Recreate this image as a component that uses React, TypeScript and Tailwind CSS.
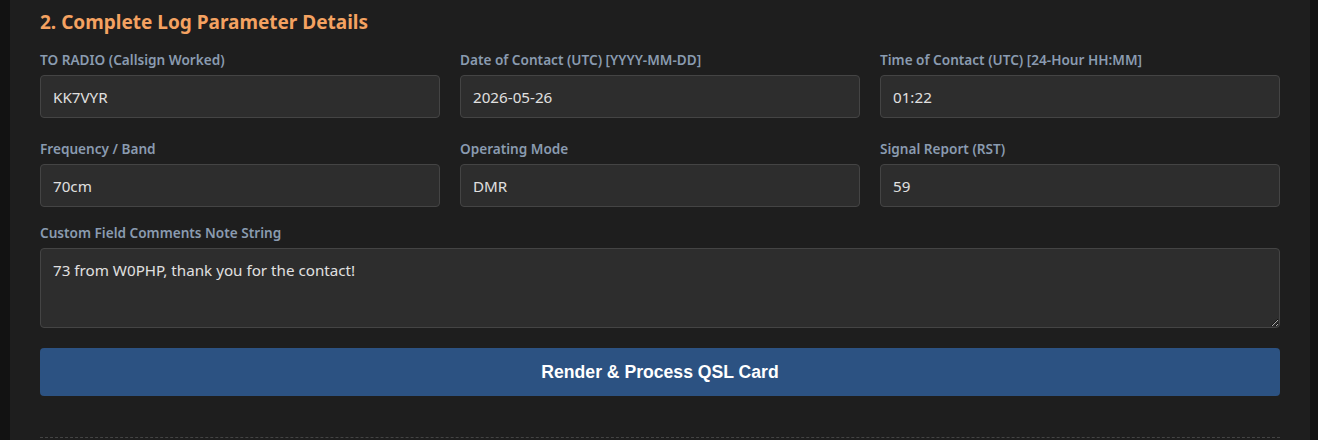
import { useState } from "react";

const fields = [
  { label: "TO RADIO (Callsign Worked)", value: "KK7VYR" },
  { label: "Date of Contact (UTC) [YYYY-MM-DD]", value: "2026-05-26" },
  { label: "Time of Contact (UTC) [24-Hour HH:MM]", value: "01:22" },
  { label: "Frequency / Band", value: "70cm" },
  { label: "Operating Mode", value: "DMR" },
  { label: "Signal Report (RST)", value: "59" },
];

export default function App() {
  const [values, setValues] = useState(fields.map((f) => f.value));
  const [comment, setComment] = useState("73 from W0PHP, thank you for the contact!");

  return (
    <div className="min-h-[440px] bg-[#121212] font-['Noto_Sans',sans-serif]">
      <div className="ml-[10px] w-[1300px] bg-[#1e1e1e] px-[30px] pt-[9px] h-[440px] overflow-hidden">
        <h2 className="text-[19px] leading-[26px] font-bold text-[#f4a261]">
          2. Complete Log Parameter Details
        </h2>

        <div className="mt-[16px] grid grid-cols-3 gap-x-[20px] gap-y-[22px]">
          {fields.map((f, i) => (
            <div key={f.label} className="flex flex-col">
              <label className="text-[13.6px] leading-[18px] font-semibold text-[#8a9bb0] mb-[6px]">
                {f.label}
              </label>
              <input
                value={values[i]}
                onChange={(e) => {
                  const next = [...values];
                  next[i] = e.target.value;
                  setValues(next);
                }}
                className="h-[43px] rounded-[4px] border border-[#444] bg-[#2d2d2d] px-[12px] text-[15.2px] text-[#e0e0e0] outline-none"
              />
            </div>
          ))}
        </div>

        <div className="mt-[17px] flex flex-col">
          <label className="text-[13.6px] leading-[18px] font-semibold text-[#8a9bb0] mb-[6px]">
            Custom Field Comments Note String
          </label>
          <textarea
            value={comment}
            onChange={(e) => setComment(e.target.value)}
            className="h-[80px] rounded-[4px] border border-[#444] bg-[#2d2d2d] px-[12px] py-[10px] text-[15.2px] leading-[22px] text-[#e0e0e0] outline-none resize-y"
          />
        </div>

        <button className="mt-[20px] h-[48px] w-full rounded-[4px] bg-[#2c5282] font-['Liberation_Sans',Arial,sans-serif] text-[17.6px] font-bold text-white">
          Render &amp; Process QSL Card
        </button>

        <div className="mt-[41px] border-t border-dashed border-[#444]" />
      </div>
    </div>
  );
}
